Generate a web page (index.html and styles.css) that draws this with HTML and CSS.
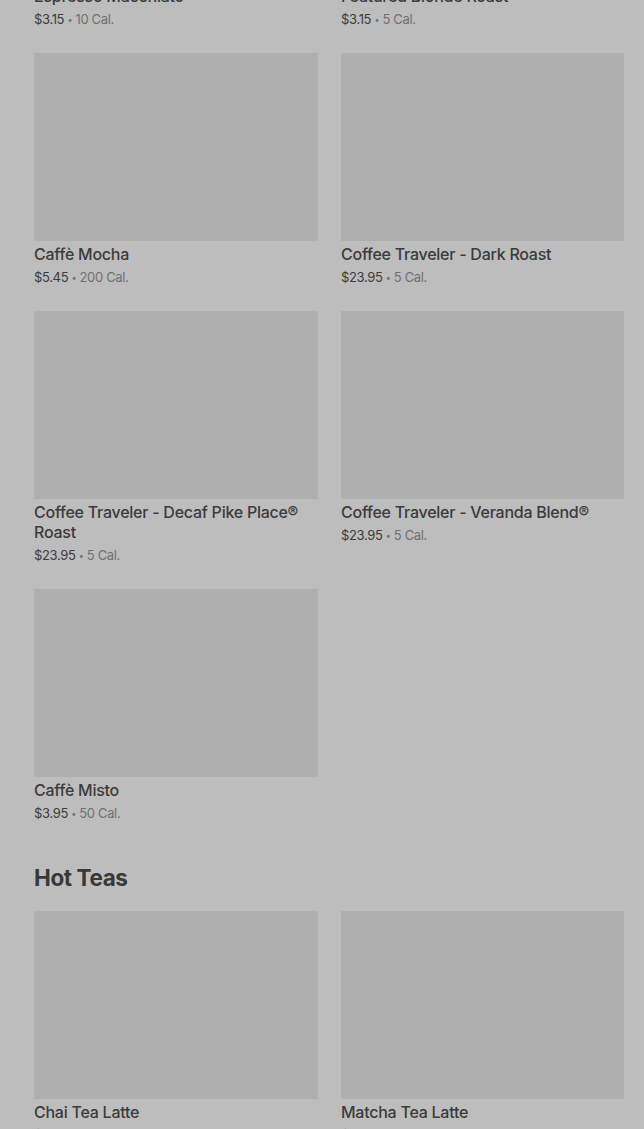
FILE: index.html
```html
<!DOCTYPE html>
<html>
<head>
<meta charset="utf-8">
<link rel="stylesheet" href="styles.css">
</head>
<body>
<main class="menu">
  <section class="section">
    <div class="grid">
      <div class="card"><div class="thumb"></div><div class="title">Espresso Macchiato</div><div class="meta"><span class="price">$3.15</span> <span class="dot">•</span> 10 Cal.</div></div>
      <div class="card"><div class="thumb"></div><div class="title">Featured Blonde Roast</div><div class="meta"><span class="price">$3.15</span> <span class="dot">•</span> 5 Cal.</div></div>
      <div class="card"><div class="thumb"></div><div class="title">Caffè Mocha</div><div class="meta"><span class="price">$5.45</span> <span class="dot">•</span> 200 Cal.</div></div>
      <div class="card"><div class="thumb"></div><div class="title">Coffee Traveler - Dark Roast</div><div class="meta"><span class="price">$23.95</span> <span class="dot">•</span> 5 Cal.</div></div>
      <div class="card"><div class="thumb"></div><div class="title">Coffee Traveler - Decaf Pike Place® Roast</div><div class="meta"><span class="price">$23.95</span> <span class="dot">•</span> 5 Cal.</div></div>
      <div class="card"><div class="thumb"></div><div class="title">Coffee Traveler - Veranda Blend®</div><div class="meta"><span class="price">$23.95</span> <span class="dot">•</span> 5 Cal.</div></div>
      <div class="card"><div class="thumb"></div><div class="title">Caffè Misto</div><div class="meta"><span class="price">$3.95</span> <span class="dot">•</span> 50 Cal.</div></div>
    </div>
  </section>
  <section class="section">
    <h2 class="heading">Hot Teas</h2>
    <div class="grid">
      <div class="card"><div class="thumb"></div><div class="title">Chai Tea Latte</div><div class="meta"><span class="price">$4.95</span> <span class="dot">•</span> 240 Cal.</div></div>
      <div class="card"><div class="thumb"></div><div class="title">Matcha Tea Latte</div><div class="meta"><span class="price">$5.25</span> <span class="dot">•</span> 240 Cal.</div></div>
    </div>
  </section>
</main>
</body>
</html>
```
FILE: styles.css
```css
html, body {
  margin: 0;
  padding: 0;
  background: #bdbdbd;
  overflow: hidden;
}
body {
  font-family: Inter, "Noto Sans", sans-serif;
  color: #3a3a3a;
}
.menu {
  margin-top: -205px;
  padding: 0 20px 0 34px;
}
.grid {
  display: grid;
  grid-template-columns: 284px 283px;
  column-gap: 23px;
  row-gap: 24px;
  align-items: start;
}
.thumb {
  height: 188px;
  background: #afafaf;
}
.title {
  margin-top: 3px;
  font-size: 16px;
  line-height: 20px;
  font-weight: 500;
  color: #3b3b3b;
  letter-spacing: -0.25px;
}
.meta {
  margin-top: 3px;
  height: 20px;
  font-size: 13px;
  line-height: 20px;
  color: #707070;
  letter-spacing: -0.35px;
}
.dot {
  font-size: 9px;
  line-height: 0;
  vertical-align: 1px;
}
.price {
  color: #3b3b3b;
}
.section + .section {
  margin-top: 39px;
}
.heading {
  margin: 0 0 17px;
  font-size: 22.5px;
  line-height: 32px;
  font-weight: 700;
  color: #383838;
  letter-spacing: -0.4px;
}
```
